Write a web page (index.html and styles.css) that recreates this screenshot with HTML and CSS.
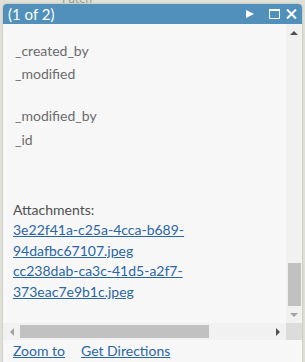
FILE: index.html
```html
<!DOCTYPE html>
<html>
<head>
<meta charset="utf-8">
<link rel="stylesheet" href="styles.css">
</head>
<body>
<div class="map">
  <span class="map-label">Patch</span>
  <div class="popup">
    <div class="header">
      <span class="title">(1 of 2)</span>
      <div class="tools">
        <svg class="icon play" width="8" height="8" viewBox="0 0 8 8"><path d="M0 0 L8 4 L0 8 Z" fill="#fff"/></svg>
        <svg class="icon max" width="11" height="10" viewBox="0 0 11 10"><path d="M0.5 0.5 H10.5 V9.5 H0.5 Z M0.5 1.5 H10.5" fill="none" stroke="#fff" stroke-width="1"/><rect x="0" y="0" width="11" height="2" fill="#fff"/></svg>
        <svg class="icon close" width="11" height="10" viewBox="0 0 11 10"><path d="M1 0.5 L10 9.5 M10 0.5 L1 9.5" stroke="#fff" stroke-width="2"/></svg>
      </div>
    </div>
    <div class="main">
      <div class="content">
        <div class="field f1">_created_by</div>
        <div class="field f2">_modified</div>
        <div class="field f3">_modified_by</div>
        <div class="field f4">_id</div>
        <div class="attach">
          <div class="attach-label">Attachments:</div>
          <a class="link" href="#">3e22f41a-c25a-4cca-b689-<br>94dafbc67107.jpeg</a><br>
          <a class="link" href="#">cc238dab-ca3c-41d5-a2f7-<br>373eac7e9b1c.jpeg</a>
        </div>
      </div>
      <div class="vscroll">
        <div class="vbtn"><span class="arr-up"></span></div>
        <div class="vtrack"><div class="vthumb"></div></div>
        <div class="vbtn"><span class="arr-down"></span></div>
      </div>
    </div>
    <div class="hrow">
      <div class="hscroll">
        <div class="hbtn"><span class="arr-left"></span></div>
        <div class="htrack"><div class="hthumb"></div></div>
        <div class="hbtn"><span class="arr-right"></span></div>
      </div>
      <div class="corner"></div>
    </div>
    <div class="footer">
      <a class="link" href="#">Zoom to</a>
      <a class="link" href="#">Get Directions</a>
    </div>
  </div>
</div>
</body>
</html>
```
FILE: styles.css
```css
html, body {
  margin: 0;
  padding: 0;
}
body {
  width: 305px;
  height: 362px;
  overflow: hidden;
  background: #dfe0d8;
  font-family: Lato, "Open Sans", sans-serif;
}
.map {
  position: relative;
  width: 305px;
  height: 362px;
  padding-top: 4px;
  box-sizing: border-box;
}
.map-label {
  position: absolute;
  left: 62px;
  top: -6px;
  font-size: 11px;
  line-height: 11px;
  color: #9a9a94;
  font-family: "DejaVu Sans", sans-serif;
}
.popup {
  position: relative;
  margin-left: 3px;
  width: 299px;
  height: 370px;
  background: #f7f7f7;
  border-radius: 4px 4px 0 0;
  box-shadow: 0 0 2px rgba(0,0,0,0.25);
  display: flex;
  flex-direction: column;
}
.header {
  height: 20px;
  background: #5190bb;
  border-radius: 4px 4px 0 0;
  display: flex;
  align-items: center;
  justify-content: space-between;
  padding: 0 5px 0 5px;
  color: #fff;
}
.title {
  font-size: 15px;
  line-height: 20px;
}
.tools {
  display: flex;
  align-items: center;
}
.icon { display: block; }
.play { margin-right: 15px; }
.max { margin-right: 6px; }
.main {
  height: 299px;
  display: flex;
}
.content {
  flex: 1;
  padding-left: 10px;
  color: #6b6b6b;
  font-size: 14px;
  line-height: 20px;
}
.field { height: 20px; padding-left: 2px; }
.f1 { margin-top: 17px; }
.f2 { margin-top: 3px; }
.f3 { margin-top: 22px; }
.f4 { margin-top: 4px; }
.attach {
  margin-top: 50px;
  line-height: 20.7px;
}
.attach-label {
  color: #4f4f4f;
  line-height: 20px;
}
.link {
  color: #2a66a3;
  text-decoration: underline;
}
.vscroll {
  width: 16px;
  background: #f1f1f1;
  display: flex;
  flex-direction: column;
}
.vbtn {
  height: 17px;
  display: flex;
  align-items: center;
  justify-content: center;
}
.vtrack {
  flex: 1;
  display: flex;
  flex-direction: column;
  justify-content: flex-end;
  padding: 0 1px 0 2px;
}
.vthumb {
  height: 43px;
  background: #c1c1c1;
}
.arr-up {
  width: 0; height: 0;
  border-left: 4px solid transparent;
  border-right: 4px solid transparent;
  border-bottom: 4px solid #505050;
}
.arr-down {
  width: 0; height: 0;
  border-left: 4px solid transparent;
  border-right: 4px solid transparent;
  border-top: 4px solid #a3a3a3;
}
.hrow {
  height: 17px;
  display: flex;
}
.hscroll {
  flex: 1;
  background: #f1f1f1;
  display: flex;
}
.hbtn {
  width: 17px;
  display: flex;
  align-items: center;
  justify-content: center;
}
.htrack {
  flex: 1;
  padding: 2px 0;
}
.hthumb {
  width: 189px;
  height: 13px;
  background: #c1c1c1;
}
.arr-left {
  width: 0; height: 0;
  border-top: 4px solid transparent;
  border-bottom: 4px solid transparent;
  border-right: 4px solid #a3a3a3;
}
.arr-right {
  width: 0; height: 0;
  border-top: 4px solid transparent;
  border-bottom: 4px solid transparent;
  border-left: 4px solid #505050;
}
.corner {
  width: 16px;
  background: #dcdcdc;
}
.footer {
  padding-left: 10px;
  font-size: 14px;
  line-height: 20px;
  padding-top: 1px;
  display: flex;
  gap: 16px;
}
```
